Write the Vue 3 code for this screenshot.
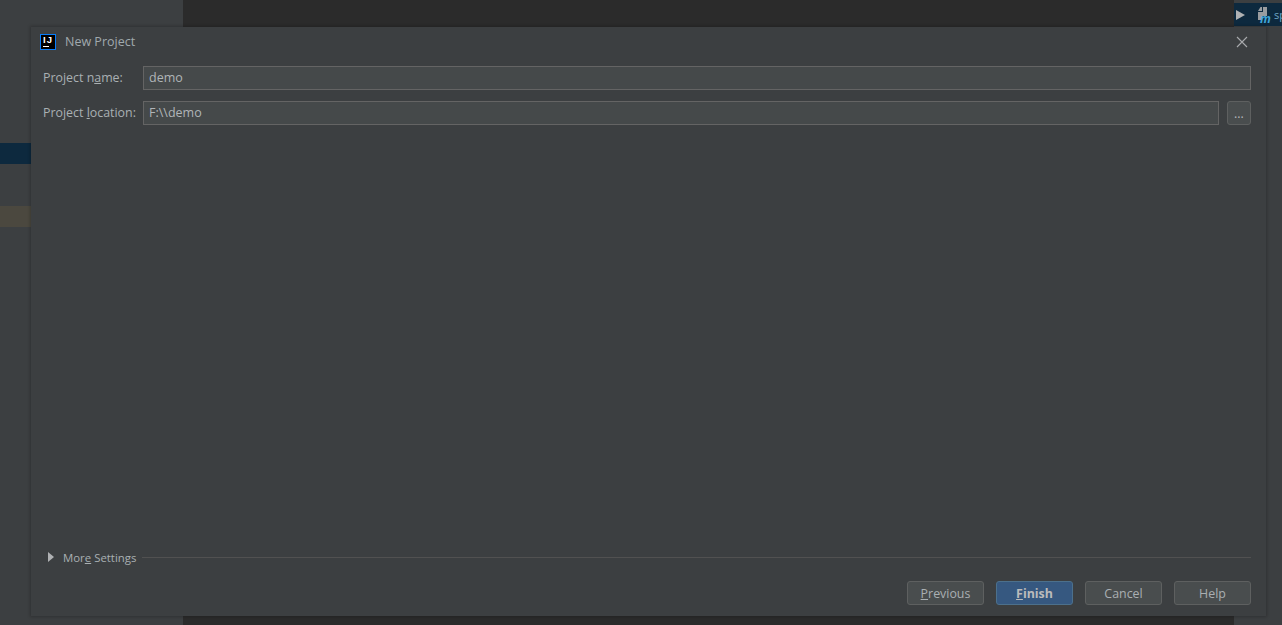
<template>
  <div class="ide">
    <aside class="project-panel">
      <div class="row-selected"></div>
      <div class="row-modified"></div>
    </aside>
    <main class="editor"></main>
    <div class="right-panel">
      <div class="run-bar">
        <svg class="run-icon" width="9" height="10" viewBox="0 0 9 10"><path d="M0 0 L9 5 L0 10 Z" fill="#afb1b3" /></svg>
        <svg class="m-icon" width="14" height="16" viewBox="0 0 14 16">
          <path d="M3.5 0 H5 V4 H1 Z M6 0 H10 V9 H5 V13 H1 V5 H6 Z" fill="#9a9da0" />
          <text x="3" y="15.5" class="m-letter">m</text>
        </svg>
        <span class="run-text">sp</span>
      </div>
    </div>

    <section class="dialog">
      <header class="title-bar">
        <div class="ij-logo"><span class="ij-text">IJ</span><span class="ij-line"></span></div>
        <span class="title">New Project</span>
        <svg class="close" width="12" height="12" viewBox="0 0 12 12">
          <path d="M1 1 L11 11 M11 1 L1 11" stroke="#a9abad" stroke-width="1.1" fill="none" />
        </svg>
      </header>

      <div class="form">
        <div class="field">
          <label class="label">Project n<u>a</u>me:</label>
          <div class="input">demo</div>
        </div>
        <div class="field">
          <label class="label">Project <u>l</u>ocation:</label>
          <div class="input">F:\\demo</div>
          <button class="browse">...</button>
        </div>
      </div>

      <div class="more-settings">
        <svg width="6" height="10" viewBox="0 0 6 10"><path d="M0 0 L6 5 L0 10 Z" fill="#afb1b3" /></svg>
        <span class="more-label">Mor<u>e</u> Settings</span>
        <div class="rule"></div>
      </div>

      <footer class="buttons">
        <button class="btn"><u>P</u>revious</button>
        <button class="btn primary"><u>F</u>inish</button>
        <button class="btn">Cancel</button>
        <button class="btn">Help</button>
      </footer>
    </section>
  </div>
</template>

<script setup>
</script>

<style>
html, body {
  margin: 0;
  background: #3c3f41;
  overflow: hidden;
}
</style>

<style scoped>
.ide {
  position: relative;
  display: flex;
  width: 1282px;
  height: 625px;
  overflow: hidden;
  font-family: "Open Sans", "Noto Sans", sans-serif;
  font-size: 12.4px;
  color: #a9b0b3;
}

.project-panel {
  width: 183px;
  background: #3c3f41;
  display: flex;
  flex-direction: column;
}

.row-selected {
  height: 21px;
  margin-top: 143px;
  background: #0d293e;
}

.row-modified {
  height: 21px;
  margin-top: 42px;
  background: #4b483f;
}

.editor {
  flex: 1;
  background: #2b2b2b;
}

.right-panel {
  width: 48px;
  background: #3c3f41;
  padding-top: 3px;
}

.run-bar {
  height: 23px;
  background: #0d293e;
  display: flex;
  align-items: center;
  padding-left: 2px;
  overflow: hidden;
}

.run-icon {
  flex: none;
  margin-right: 12px;
}

.m-icon {
  flex: none;
}

.m-letter {
  font-family: "Open Sans", sans-serif;
  font-size: 12px;
  font-weight: 700;
  font-style: italic;
  fill: #3ea5d8;
}

.run-text {
  flex: none;
  color: #6fa8c7;
  font-size: 11px;
  margin-left: 3px;
}

.dialog {
  position: absolute;
  left: 31px;
  top: 27px;
  width: 1235px;
  height: 589px;
  background: #3c3f41;
  box-shadow: 0 0 3px 1px rgba(0, 0, 0, 0.22);
  display: flex;
  flex-direction: column;
}

.title-bar {
  height: 29px;
  display: flex;
  align-items: center;
  padding: 0 18px 0 9px;
}

.ij-logo {
  width: 12px;
  height: 12px;
  border: 1px solid #087cfa;
  padding: 1px;
  background: #000;
  position: relative;
  margin-right: 9px;
}

.ij-text {
  position: absolute;
  left: 2px;
  top: -1px;
  font-family: "Liberation Sans", sans-serif;
  font-size: 9.5px;
  line-height: 11px;
  font-weight: 700;
  letter-spacing: 1px;
  color: #fff;
}

.ij-line {
  position: absolute;
  left: 2px;
  bottom: 2px;
  width: 6px;
  height: 1px;
  background: #fff;
}

.title {
  flex: 1;
  color: #a0a9ad;
  font-size: 12.5px;
}

.form {
  display: flex;
  flex-direction: column;
  gap: 11px;
  padding: 10px 15px 0 12px;
}

.field {
  display: flex;
  align-items: center;
  height: 24px;
}

.label {
  width: 100px;
  flex: none;
  white-space: nowrap;
  margin-top: -1px;
}

.input {
  flex: 1;
  height: 22px;
  line-height: 22px;
  padding-left: 5px;
  border: 1px solid #646464;
  background: #45494a;
  color: #b0b5b8;
  font-size: 12.5px;
}

.browse {
  width: 24px;
  height: 24px;
  margin-left: 8px;
  padding: 0;
  border: 1px solid #5e6060;
  border-radius: 3px;
  background: #494d4e;
  color: #b4b7b9;
  font: inherit;
}

.more-settings {
  margin-top: auto;
  display: flex;
  align-items: center;
  padding: 0 15px 0 17px;
  height: 20px;
  position: relative;
  top: -1px;
}

.more-label {
  margin-left: 9px;
  white-space: nowrap;
  font-size: 11.4px;
}

.rule {
  flex: 1;
  height: 1px;
  margin-left: 6px;
  background: #515151;
}

.buttons {
  display: flex;
  justify-content: flex-end;
  gap: 12px;
  padding: 13px 15px 11px 0;
}

.btn {
  width: 77px;
  height: 24px;
  padding: 0;
  border: 1px solid #5e6060;
  border-radius: 3px;
  background: #494d4e;
  color: #a9afb2;
  font: inherit;
  font-size: 12.4px;
}

.btn.primary {
  background: #365880;
  border-color: #4c708c;
  color: #bbbbbb;
  font-weight: 700;
}
</style>
